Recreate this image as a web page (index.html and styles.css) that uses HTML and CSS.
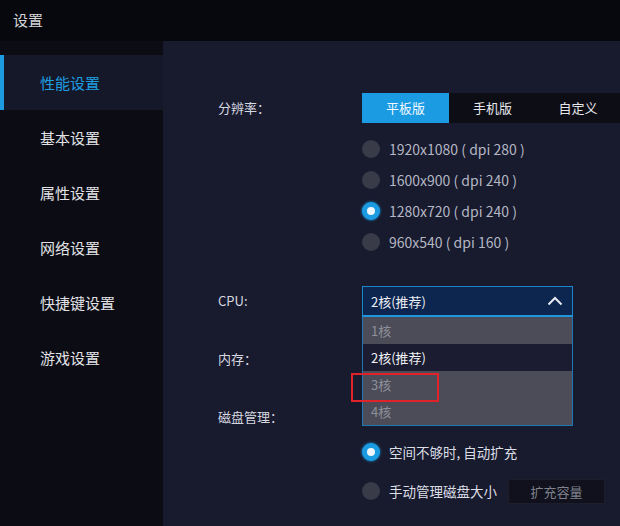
FILE: index.html
```html
<!DOCTYPE html>
<html lang="zh-CN">
<head>
  <meta charset="UTF-8">
  <title>设置</title>
  <link rel="stylesheet" href="styles.css">
</head>
<body>
  <header class="titlebar">设置</header>

  <div class="window">
    <nav class="sidebar">
      <div class="nav-item active">性能设置</div>
      <div class="nav-item">基本设置</div>
      <div class="nav-item">属性设置</div>
      <div class="nav-item">网络设置</div>
      <div class="nav-item">快捷键设置</div>
      <div class="nav-item">游戏设置</div>
    </nav>

    <main class="panel">
      <div class="row">
        <div class="label">分辨率：</div>
        <div class="control">
          <div class="tabs">
            <div class="tab active">平板版</div>
            <div class="tab">手机版</div>
            <div class="tab">自定义</div>
          </div>
          <div class="radio-list">
            <div class="radio"><span class="dot"></span>1920x1080 ( dpi 280 )</div>
            <div class="radio"><span class="dot"></span>1600x900 ( dpi 240 )</div>
            <div class="radio"><span class="dot checked"></span>1280x720 ( dpi 240 )</div>
            <div class="radio"><span class="dot"></span>960x540 ( dpi 160 )</div>
          </div>
        </div>
      </div>

      <div class="rows">
        <div class="row line">
          <div class="label">CPU:</div>
          <div class="control">
            <div class="select">
              <div class="select-head">
                <span>2核(推荐)</span>
                <svg width="16" height="10" viewBox="0 0 16 10"><path d="M1.5 8.5 L8 2 L14.5 8.5" fill="none" stroke="#e8eaf0" stroke-width="2"/></svg>
              </div>
              <div class="options">
                <div class="option">1核</div>
                <div class="option selected">2核(推荐)</div>
                <div class="option">3核<span class="mark"></span></div>
                <div class="option">4核</div>
              </div>
            </div>
          </div>
        </div>
        <div class="row line">
          <div class="label">内存：</div>
          <div class="control"></div>
        </div>
        <div class="row line">
          <div class="label">磁盘管理：</div>
          <div class="control"></div>
        </div>
      </div>

      <div class="row">
        <div class="label"></div>
        <div class="control disk">
          <div class="radio big"><span class="dot checked"></span>空间不够时, 自动扩充</div>
          <div class="radio big"><span class="dot"></span>手动管理磁盘大小<button class="btn">扩充容量</button></div>
        </div>
      </div>
    </main>
  </div>
</body>
</html>
```

FILE: styles.css
```css
body {
  margin: 0;
  width: 620px;
  height: 526px;
  overflow: hidden;
  background: #07080e;
  color: #d6d8e0;
  font-family: "Noto Sans CJK SC", "Liberation Sans", sans-serif;
}
.titlebar {
  height: 41px;
  line-height: 40px;
  padding-left: 13px;
  font-size: 15px;
  color: #d4d4d8;
  background: #07080e;
}
.window {
  display: flex;
  height: 485px;
}
.sidebar {
  width: 163px;
  flex: none;
  padding-top: 14px;
  background: #0b0c14;
}
.nav-item {
  height: 55px;
  line-height: 55px;
  padding-left: 40px;
  font-size: 15px;
  color: #e2e2e6;
}
.nav-item.active {
  color: #1f9ee2;
  background: #151829;
  box-shadow: inset 4px 0 0 #1c9be0;
}
.panel {
  flex: 1;
  min-width: 0;
  padding: 52px 0 0 55px;
  background: #181a2d;
}
.row {
  display: flex;
}
.label {
  width: 144px;
  flex: none;
  height: 31px;
  line-height: 29px;
  font-size: 13px;
  color: #d6d8e0;
}
.control {
  flex: 1;
  min-width: 0;
}
.tabs {
  display: flex;
  height: 30px;
  background: #0c0d15;
}
.tab {
  width: 87px;
  line-height: 30px;
  text-align: center;
  font-size: 13px;
  color: #e6e7ec;
}
.tab:last-child {
  flex: 1;
}
.tab.active {
  background: #1a9be2;
  color: #f2f8ff;
}
.radio-list {
  margin-top: 10px;
}
.radio {
  display: flex;
  align-items: center;
  height: 31px;
  font-size: 14px;
  color: #b4b7c4;
  white-space: nowrap;
}
.dot {
  width: 18px;
  height: 18px;
  margin-right: 9px;
  border-radius: 50%;
  background: #3a3b49;
  flex: none;
}
.dot.checked {
  box-sizing: border-box;
  border: 5px solid #1a9be2;
  background: #eef7ff;
  box-shadow: 0 0 3px #1a9be2;
}
.rows {
  display: flex;
  flex-direction: column;
  gap: 27px;
  margin-top: 29px;
}
.select {
  position: relative;
  width: 211px;
}
.select-head {
  display: flex;
  justify-content: space-between;
  align-items: center;
  box-sizing: border-box;
  height: 31px;
  padding: 0 9px 0 8px;
  border: 1px solid #1d86c8;
  border-bottom: 2px solid #1f95dc;
  background: #0c2650;
  font-size: 13px;
  color: #eceef4;
}
.options {
  position: absolute;
  top: 31px;
  left: 0;
  right: 0;
  border: 1px solid #1d78b4;
  border-top: none;
  z-index: 2;
}
.option {
  position: relative;
  height: 27px;
  line-height: 27px;
  padding-left: 8px;
  font-size: 13px;
  color: #8d8f9a;
  background: #4b4c57;
}
.option.selected {
  color: #eff0f4;
  background: #1b1c31;
}
.mark {
  position: absolute;
  left: -12px;
  top: 2px;
  width: 84px;
  height: 25px;
  border: 2px solid #e0232b;
  z-index: 3;
}
.disk {
  display: flex;
  flex-direction: column;
  gap: 9px;
  margin-top: 4px;
}
.radio.big {
  height: 30px;
  font-size: 13.5px;
  color: #dcdee6;
}
.btn {
  margin-left: 11px;
  width: 97px;
  height: 25px;
  padding: 0;
  border: 1px solid #1c1e2c;
  background: #10111c;
  font-family: inherit;
  font-size: 13px;
  color: #7f818c;
}
```
